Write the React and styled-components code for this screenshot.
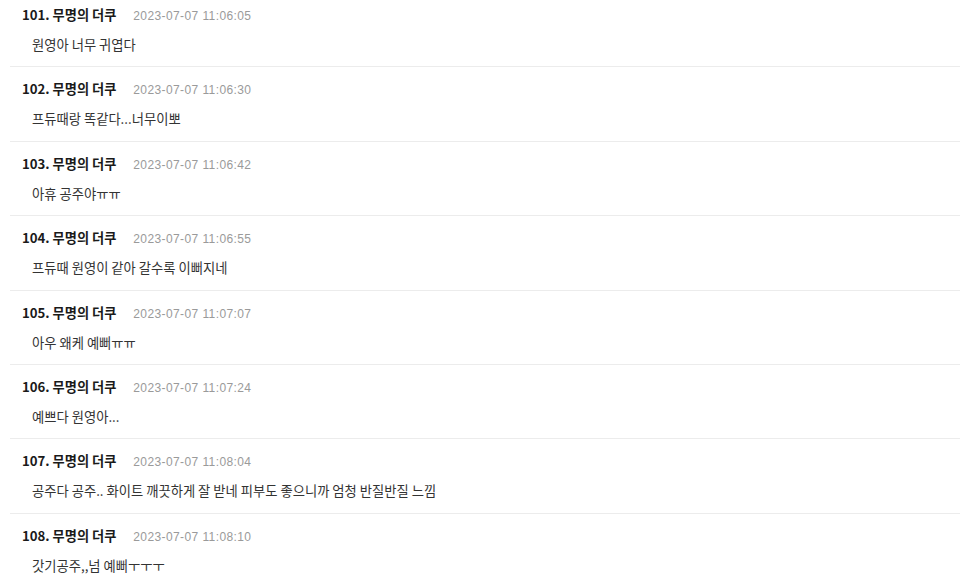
import React from "react";
import styled, { createGlobalStyle } from "styled-components";

const comments = [
  { no: 101, date: "2023-07-07 11:06:05", text: "원영아 너무 귀엽다" },
  { no: 102, date: "2023-07-07 11:06:30", text: "프듀때랑 똑같다...너무이뽀" },
  { no: 103, date: "2023-07-07 11:06:42", text: "아휴 공주야ㅠㅠ" },
  { no: 104, date: "2023-07-07 11:06:55", text: "프듀때 원영이 같아 갈수록 이뻐지네" },
  { no: 105, date: "2023-07-07 11:07:07", text: "아우 왜케 예뻐ㅠㅠ" },
  { no: 106, date: "2023-07-07 11:07:24", text: "예쁘다 원영아..." },
  { no: 107, date: "2023-07-07 11:08:04", text: "공주다 공주.. 화이트 깨끗하게 잘 받네 피부도 좋으니까 엄청 반질반질 느낌" },
  { no: 108, date: "2023-07-07 11:08:10", text: "갓기공주,,넘 예뻐ㅜㅜㅜ" },
];

function App() {
  return (
    <>
      <GlobalStyle />
      <List>
        {comments.map((c) => (
          <Row key={c.no}>
            <Head>
              <Author>{c.no}. 무명의 더쿠</Author>
              <Time>{c.date}</Time>
            </Head>
            <Body>{c.text}</Body>
          </Row>
        ))}
      </List>
    </>
  );
}

export default App;

const GlobalStyle = createGlobalStyle`
  body {
    margin: 0;
    background: #fff;
    font-family: "Noto Sans CJK KR", "Noto Sans", sans-serif;
    overflow: hidden;
  }
`;

const List = styled.div`
  margin-top: -7px;
  padding-left: 10px;
`;

const Row = styled.div`
  padding: 14px 0 12.4px;
  border-bottom: 1px solid #ececec;
`;

const Head = styled.div`
  display: flex;
  align-items: baseline;
  height: 16px;
  line-height: 16px;
  padding-left: 12px;
`;

const Author = styled.span`
  font-size: 13.2px;
  font-weight: 700;
  color: #1a1a1a;
`;

const Time = styled.span`
  margin-left: 17px;
  font-family: "Liberation Sans", "Noto Sans", sans-serif;
  font-size: 12px;
  letter-spacing: 0.4px;
  color: #9a9a9a;
`;

const Body = styled.div`
  margin-top: 13px;
  padding-left: 22px;
  height: 18px;
  line-height: 18px;
  font-size: 13.3px;
  color: #333;
`;
